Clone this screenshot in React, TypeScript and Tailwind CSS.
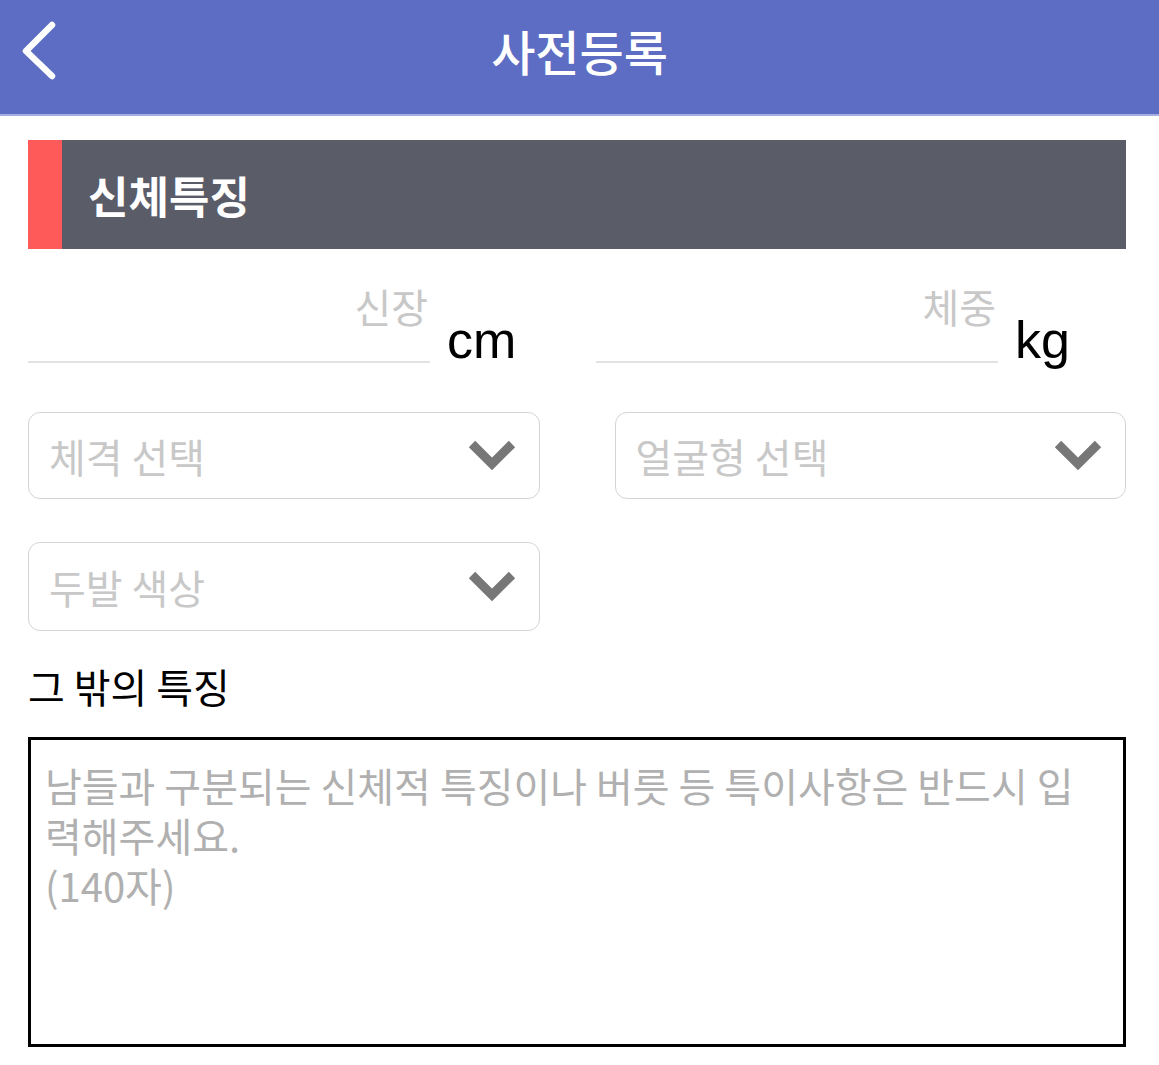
import React from "react";

const KR = { fontFamily: '"Noto Sans CJK KR", "Noto Sans", sans-serif' };
const LAT = { fontFamily: '"Liberation Sans", Arial, sans-serif' };

function Chevron() {
  return (
    <svg width="48" height="32" viewBox="0 0 48 32" className="shrink-0">
      <polyline points="4,4 24,24 44,4" fill="none" stroke="#777777" strokeWidth="9" strokeLinejoin="miter" strokeLinecap="butt" />
    </svg>
  );
}

function Select({ label, h }: { label: string; h: string }) {
  return (
    <div className={`flex items-center justify-between rounded-[12px] border border-[#d4d4d4] pl-[20px] pr-[23px] ${h}`}>
      <span className="text-[40px] leading-none text-[#c8c8c8]" style={KR}>{label}</span>
      <Chevron />
    </div>
  );
}

function Measure({ label, unit, width }: { label: string; unit: string; width: string }) {
  return (
    <div className="flex items-end">
      <div className={`flex h-[80px] justify-end border-b-2 border-[#e2e2e2] ${width}`}>
        <span className="text-[40px] leading-[46px] text-[#c8c8c8] pr-[2px]" style={KR}>{label}</span>
      </div>
      <span className="ml-[17px] mb-[-3px] text-[52px] leading-[52px] text-black" style={LAT}>{unit}</span>
    </div>
  );
}

export default function App() {
  return (
    <div className="min-h-[1065px] w-full bg-white" style={KR}>
      <header className="grid h-[116px] grid-cols-[1fr_auto_1fr] border-b-2 border-[#a6aee0] bg-[#5c6dc3]">
        <div className="pl-[20px] pt-[20px]">
          <svg width="40" height="60" viewBox="0 0 40 60">
            <polyline points="32,5 6,31 32,56" fill="none" stroke="#ffffff" strokeWidth="6.5" strokeLinecap="round" strokeLinejoin="round" />
          </svg>
        </div>
        <div className="pt-[26px] text-[48px] font-medium leading-[48px] text-white" style={KR}>사전등록</div>
        <div />
      </header>

      <div className="pl-[28px] pr-[33px]">
        <section className="mt-[24px] flex h-[109px] bg-[#5a5c68]">
          <div className="w-[34px] bg-[#ff5a5a]" />
          <div className="flex items-center pl-[26px] text-[44px] font-bold leading-none text-white" style={KR}>신체특징</div>
        </section>

        <div className="mt-[34px] flex">
          <div className="w-[568px]">
            <Measure label="신장" unit="cm" width="w-[402px]" />
          </div>
          <Measure label="체중" unit="kg" width="w-[402px]" />
        </div>

        <div className="mt-[49px] grid grid-cols-2 gap-x-[75px] gap-y-[43px]">
          <Select label="체격 선택" h="h-[87px]" />
          <Select label="얼굴형 선택" h="h-[87px]" />
          <Select label="두발 색상" h="h-[89px]" />
        </div>

        <div className="mt-[30px] text-[40px] leading-[50px] text-black" style={KR}>그 밖의 특징</div>

        <div className="mt-[26px] h-[310px] border-[3px] border-black pl-[14px] pt-[20px] text-[40px] leading-[50px] text-[#b0b0b0]" style={KR}>
          <div className="whitespace-nowrap">남들과 구분되는 신체적 특징이나 버릇 등 특이사항은 반드시 입</div>
          <div>력해주세요.</div>
          <div>(140자)</div>
        </div>
      </div>
    </div>
  );
}
